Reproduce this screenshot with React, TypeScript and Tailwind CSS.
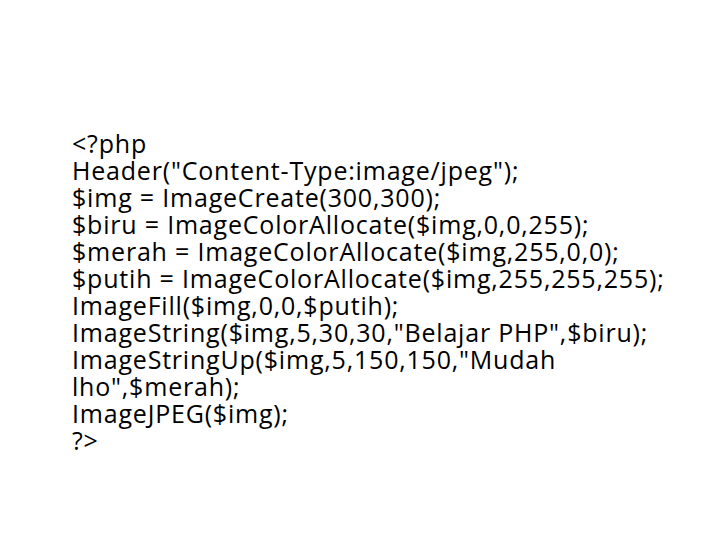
import React from 'react';

const lines = [
  '<?php',
  'Header("Content-Type:image/jpeg");',
  '$img = ImageCreate(300,300);',
  '$biru = ImageColorAllocate($img,0,0,255);',
  '$merah = ImageColorAllocate($img,255,0,0);',
  '$putih = ImageColorAllocate($img,255,255,255);',
  'ImageFill($img,0,0,$putih);',
  'ImageString($img,5,30,30,"Belajar PHP",$biru);',
  'ImageStringUp($img,5,150,150,"Mudah',
  'lho",$merah);',
  'ImageJPEG($img);',
  '?>',
];

const App: React.FC = () => {
  return (
    <div className="w-[720px] h-[540px] bg-white overflow-hidden">
      <div className="pt-[130px] pl-[72px] font-['Open_Sans',sans-serif] text-[25px] leading-[27px] tracking-[0.8px] text-black">
        {lines.map((line, i) => (
          <div key={i} className="whitespace-pre">{line}</div>
        ))}
      </div>
    </div>
  );
};

export default App;
